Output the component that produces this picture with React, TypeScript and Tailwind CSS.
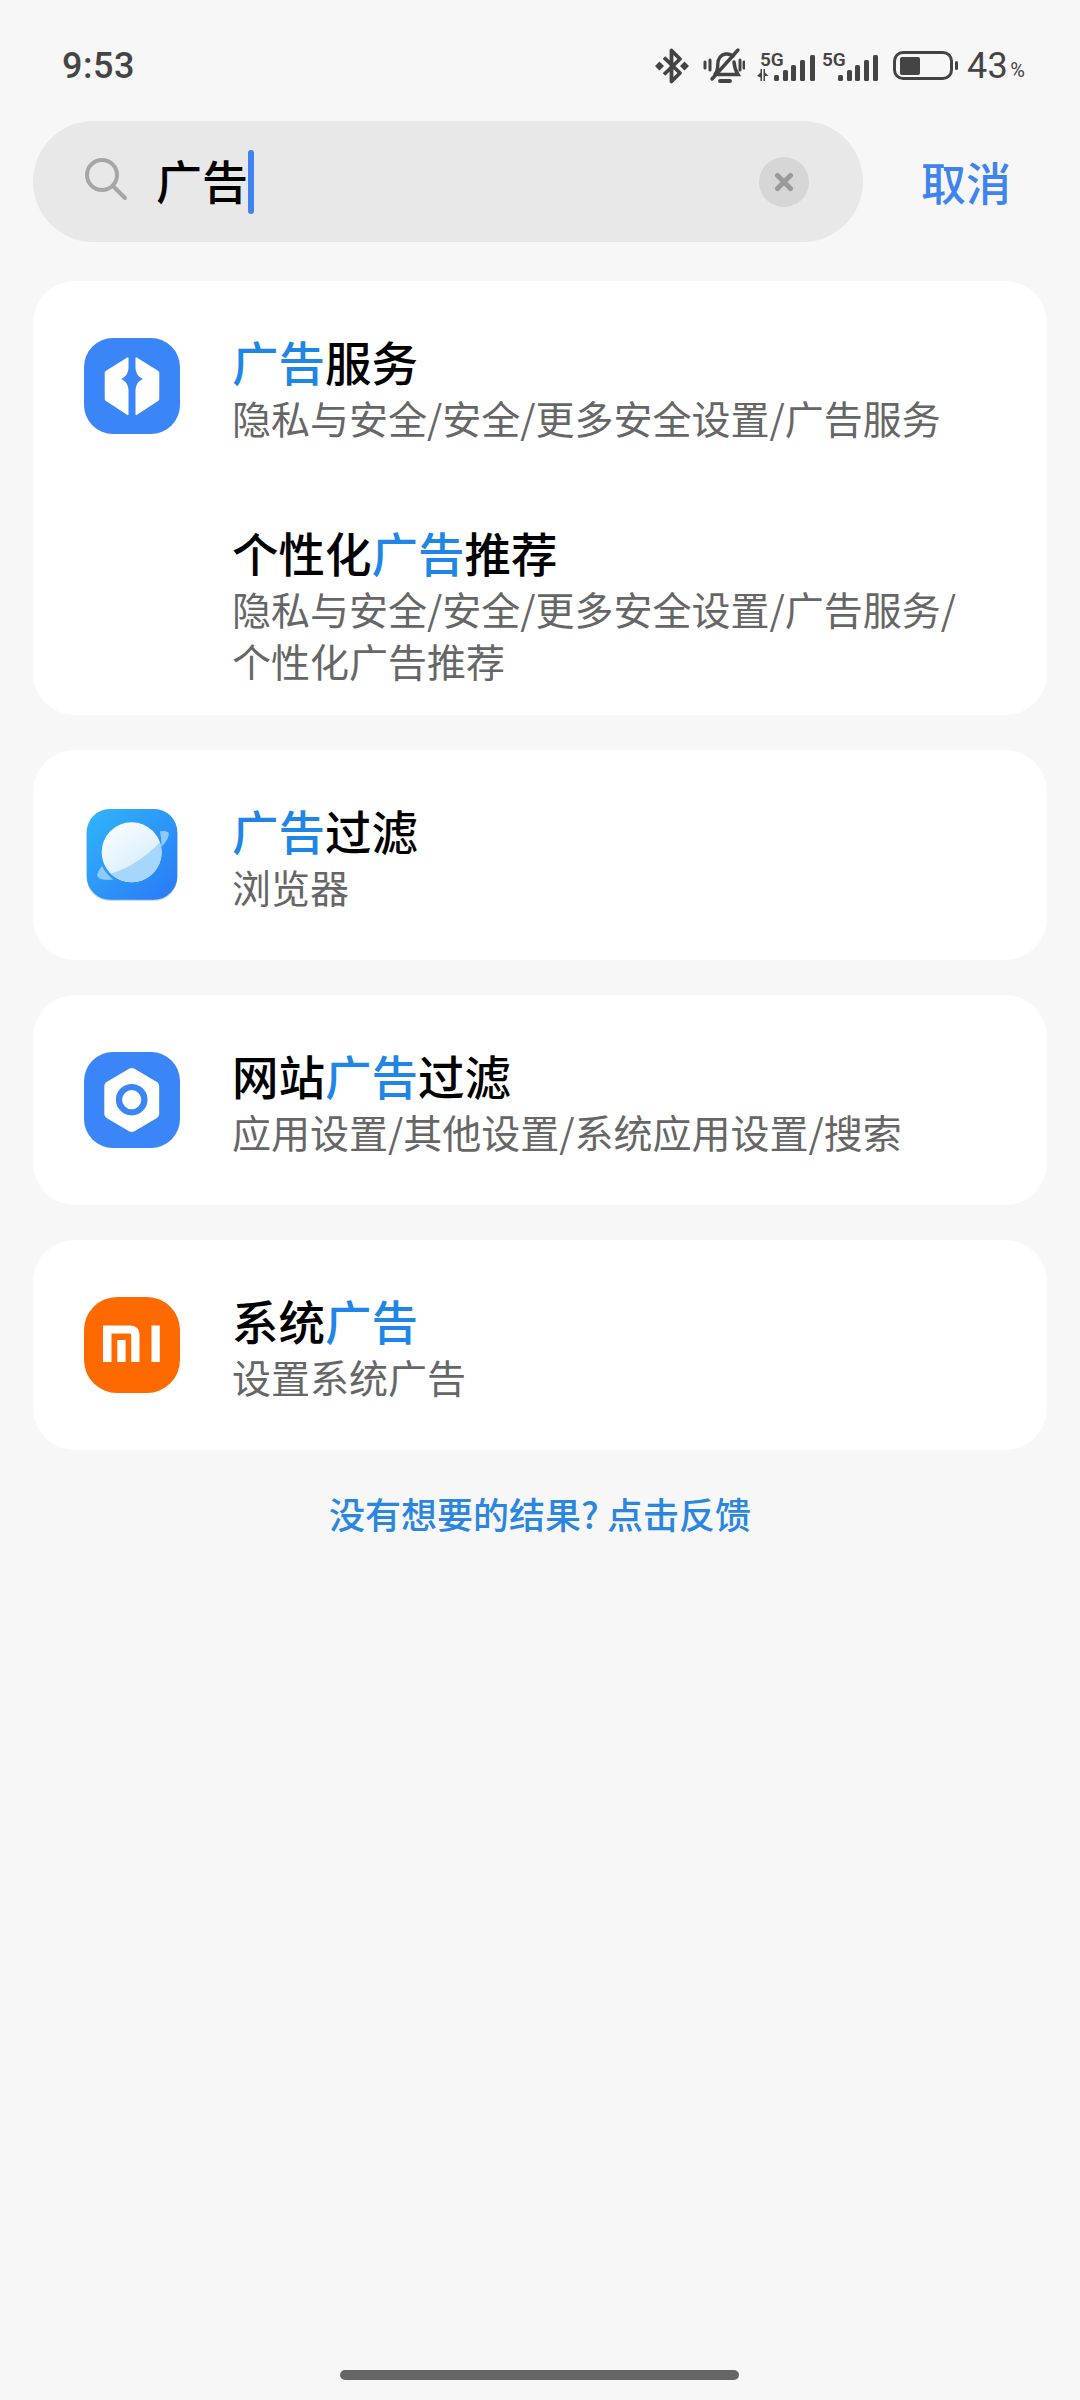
const cjk = "font-['Noto_Sans_CJK_SC','Noto_Sans',sans-serif]"

function Hl({ children }: { children: string }) {
  return <span className="text-[#1f85e6]">{children}</span>
}

function Bluetooth() {
  return (
    <svg width="34" height="38" viewBox="0 0 34 38" fill="none">
      <path d="M9 10.500 25 26 16.500 34.500V3.500L25 12 9 27.500" stroke="#444" strokeWidth="3.800" strokeLinejoin="round" />
      <path d="M4.500 14.500 9 19l-4.500 4.500L0 19zM29.500 14.500 34 19l-4.500 4.500L25 19z" fill="#444" />
    </svg>
  )
}

function MutedBell() {
  return (
    <svg width="42" height="38" viewBox="0 0 42 38" fill="none" stroke="#444" strokeLinecap="round">
      <path d="M12 27c2.500-2.500 2.800-5 2.800-10 0-5 3-9.500 8-10 3-.3 5.500.5 7 2.500M31 15c.3 4 1 8 4 12.500H15" strokeWidth="3.400" />
      <path d="M35 3 9 32" strokeWidth="3.400" />
      <path d="M17 34h10" strokeWidth="3.800" />
      <path d="M7 13v10M2 15v6M37 13v10M41 15v6" strokeWidth="3" />
    </svg>
  )
}

function Signal({ data }: { data?: boolean }) {
  const x = data ? [17, 26, 34, 43, 53] : [16, 25, 33, 42, 51]
  const tops = [25, 20, 15, 10, 5]
  return (
    <svg width="58" height="37" viewBox="0 -3 58 37">
      <text x={data ? 3 : 0} y="16" fontSize="19" fontWeight="600" fill="#444" fontFamily="Roboto, sans-serif">5G</text>
      {data && <path d="M0 26l3.500-3.500V19h1.500v12H3.500v-3.500zM6.500 19H8v3.500l3.500 3.500H8v5H6.500z" fill="#444" />}
      {x.map((bx, i) => (
        <rect key={bx} x={bx} y={tops[i]} width="5" height={31 - tops[i]} rx="1.500" fill="#444" />
      ))}
    </svg>
  )
}

function Battery() {
  return (
    <svg width="66" height="30" viewBox="0 0 66 30">
      <rect x="1.500" y="1.500" width="57" height="26" rx="8.500" fill="none" stroke="#444" strokeWidth="3" />
      <rect x="7" y="6" width="20" height="18" rx="2" fill="#444" />
      <rect x="62" y="10" width="3" height="9" rx="1.500" fill="#444" />
    </svg>
  )
}

function ServiceIcon() {
  return (
    <svg width="96" height="96" viewBox="0 0 96 96" className="shrink-0">
      <rect width="96" height="96" rx="29" fill="#3a85f8" />
      <path d="M44.500 20v10c-.5 6-3 9-7.500 11 4.500 2 7 5 7.500 11v24.500c0 .6-.6 1-1.200.6L22 63c-.8-.5-1.300-1.300-1.300-2.300V35c0-1 .5-1.800 1.300-2.300L43.300 19.400c.6-.4 1.200 0 1.200.6z" fill="#fff" />
      <path d="M51.500 20v10c.5 6 3 9 7.500 11-4.500 2-7 5-7.500 11v24.500c0 .6.6 1 1.200.6L74 63c.8-.5 1.300-1.300 1.300-2.300V35c0-1-.5-1.800-1.300-2.300L52.700 19.400c-.6-.4-1.200 0-1.200.6z" fill="#fff" />
    </svg>
  )
}

function BrowserIcon() {
  return (
    <svg width="96" height="96" viewBox="72 49 288 288" className="shrink-0">
      <defs>
        <linearGradient id="bg" x1="0" y1="0" x2="1" y2="1">
          <stop offset="0" stopColor="#2fb6fb" />
          <stop offset="1" stopColor="#2a78f6" />
        </linearGradient>
        <linearGradient id="planet" x1="0.2" y1="0.1" x2="0.7" y2="0.8">
          <stop offset="0" stopColor="#f6fbff" />
          <stop offset="1" stopColor="#d8eefd" />
        </linearGradient>
        <clipPath id="ball"><circle cx="215" cy="185" r="90" /></clipPath>
      </defs>
      <rect x="80" y="55" width="272" height="276" rx="70" fill="#cfd8e6" />
      <rect x="80" y="55" width="272" height="272" rx="70" fill="url(#bg)" />
      <circle cx="215" cy="185" r="90" fill="url(#planet)" />
      <path d="M112 258Q230 240 326 126L340 300H100z" fill="#a6d6fb" clipPath="url(#ball)" />
      <path d="M300 122Q320 118 326 126Q330 140 304 170Q305 145 300 122z" fill="#8ecbfa" />
      <path d="M126 226Q108 248 113 258Q122 270 160 267Q138 250 126 226z" fill="#8ecbfa" />
    </svg>
  )
}

function SettingsIcon() {
  return (
    <svg width="96" height="96" viewBox="0 0 96 96" className="shrink-0">
      <rect width="96" height="96" rx="29" fill="#3a85f8" />
      <path d="M45 16.800c2-1.100 3.600-1.100 5.500 0L72.500 29.800c1.800 1 2.700 2.500 2.700 4.600v27.200c0 2.100-.9 3.600-2.700 4.600L50.500 79.200c-1.900 1.100-3.500 1.100-5.500 0L23 66.200c-1.800-1-2.700-2.500-2.700-4.600V34.400c0-2.100.9-3.600 2.700-4.600z" fill="#fff" />
      <circle cx="47.700" cy="47.700" r="12.700" fill="none" stroke="#3a85f8" strokeWidth="6.200" />
    </svg>
  )
}

function MiIcon() {
  return (
    <svg width="96" height="96" viewBox="0 0 96 96" className="shrink-0">
      <rect width="96" height="96" rx="33" fill="#ff6a00" />
      <path fillRule="evenodd" d="M19 28.500h27c6 0 9.500 3.500 9.500 9.500v27h-8.300V38.500c0-1.300-.7-2-2-2H27.500V65H19zM33.300 43h8.300v22h-8.300zM67.500 28.500h8.300V65h-8.300z" fill="#fff" />
    </svg>
  )
}

function Row({ icon, title, sub, className }: { icon?: React.ReactNode; title: React.ReactNode; sub: React.ReactNode; className?: string }) {
  return (
    <div className={`flex items-center ${className ?? ''}`}>
      <div className="w-[96px] h-[96px] ml-[51px] mr-[52px] shrink-0 self-start mt-[7px]">{icon}</div>
      <div className="min-w-0">
        <div className="text-[46.500px] leading-[60px] font-medium text-black">{title}</div>
        <div className="text-[39px] leading-[52px] text-[#666666] w-[780px]">{sub}</div>
      </div>
    </div>
  )
}

export default function App() {
  return (
    <div className={`relative w-[1080px] h-[2400px] bg-[#f7f7f7] overflow-hidden ${cjk}`}>
      {/* status bar */}
      <div className="flex items-center justify-between h-[38px] mt-[47px] pl-[62px] pr-[55px] text-[#444]">
        <span className="font-['Roboto',sans-serif] font-medium text-[36px] leading-[38px] tracking-[0.5px]">9:53</span>
        <div className="flex items-center">
          <Bluetooth />
          <div className="ml-[14px]"><MutedBell /></div>
          <div className="ml-[12px] mt-[-2px]"><Signal data /></div>
          <div className="ml-[7px] mt-[-2px]"><Signal /></div>
          <div className="ml-[13px]"><Battery /></div>
          <span className="ml-[8px] font-['Roboto',sans-serif] text-[36px] leading-[38px] tracking-[0.5px]">43</span>
          <span className="ml-[2px] mt-[8px] font-['Roboto',sans-serif] text-[20px] leading-[20px]">%</span>
        </div>
      </div>

      {/* search */}
      <div className="flex items-center mt-[36px] pl-[33px]">
        <div className="flex items-center w-[830px] h-[121px] rounded-full bg-[#e8e8e8]">
          <svg width="46" height="46" viewBox="0 0 46 46" fill="none" className="ml-[50px] mt-[-2px]">
            <circle cx="19" cy="17" r="15" stroke="#a6a6a6" strokeWidth="4" />
            <path d="M30 28 42 40" stroke="#a6a6a6" strokeWidth="4" strokeLinecap="round" />
          </svg>
          <span className="ml-[27px] mt-[-5px] text-[46px] leading-[60px] font-medium text-black">广告</span>
          <span className="w-[6px] h-[64px] rounded-[3px] bg-[#3f84ee]" />
          <span className="ml-auto mr-[54px] flex items-center justify-center w-[50px] h-[50px] rounded-full bg-[#d6d6d6]">
            <svg width="20" height="20" viewBox="0 0 20 20" stroke="#9a9a9a" strokeWidth="5" strokeLinecap="round">
              <path d="M3.500 3.500 16.500 16.500M16.500 3.500 3.500 16.500" />
            </svg>
          </span>
        </div>
        <span className="ml-[58px] text-[45px] leading-[60px] font-medium text-[#3f84ee]">取消</span>
      </div>

      {/* results */}
      <div className="flex flex-col gap-[35px] mt-[39px] mx-[33px]">
        <div className="rounded-[42px] bg-white pt-[50px] pb-[29px] flex flex-col gap-[79px]">
          <Row
            icon={<ServiceIcon />}
            title={<><Hl>广告</Hl>服务</>}
            sub="隐私与安全/安全/更多安全设置/广告服务"
          />
          <Row
            title={<>个性化<Hl>广告</Hl>推荐</>}
            sub={<>隐私与安全/安全/更多安全设置/广告服务/<br />个性化广告推荐</>}
          />
        </div>
        <div className="rounded-[42px] bg-white pt-[50px] pb-[48px]">
          <Row icon={<BrowserIcon />} title={<><Hl>广告</Hl>过滤</>} sub="浏览器" />
        </div>
        <div className="rounded-[42px] bg-white pt-[50px] pb-[48px]">
          <Row icon={<SettingsIcon />} title={<>网站<Hl>广告</Hl>过滤</>} sub="应用设置/其他设置/系统应用设置/搜索" />
        </div>
        <div className="rounded-[42px] bg-white pt-[50px] pb-[48px]">
          <Row icon={<MiIcon />} title={<>系统<Hl>广告</Hl></>} sub="设置系统广告" />
        </div>
      </div>

      <div className="mt-[38px] text-center text-[36px] leading-[50px] font-medium text-[#2b86e0]">没有想要的结果? 点击反馈</div>

      {/* home indicator */}
      <div className="absolute left-[340px] top-[2370px] w-[399px] h-[10px] rounded-full bg-[#666666]" />
    </div>
  )
}
